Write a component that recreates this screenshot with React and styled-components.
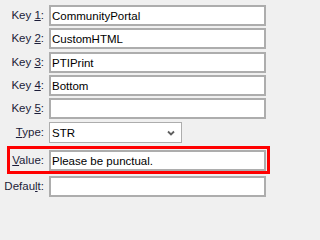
import React from "react";
import styled, { createGlobalStyle } from "styled-components";

const Global = createGlobalStyle`
  html, body { margin: 0; padding: 0; background: #f0f0f0; }
  body { font-family: "Liberation Sans", Arial, sans-serif; font-size: 11.5px; }
`;

const Form = styled.div`
  display: flex;
  flex-direction: column;
  padding-top: 5px;
  width: 271px;
  height: 202px;
  box-sizing: border-box;
`;

const Row = styled.div`
  display: grid;
  grid-template-columns: ${(p) => p.$labelW || 44}px 217px;
  column-gap: 5px;
  align-items: center;
  margin-top: ${(p) => p.$mt || 0}px;
`;

const Highlight = styled.div`
  margin-top: ${(p) => p.$mt || 0}px;
  margin-left: 7px;
  width: 263px;
  box-sizing: border-box;
  border: 3px solid #ff0000;
  padding: 1px 0 0 0;
`;

const Label = styled.label`
  text-align: right;
  color: #1c1c38;
  white-space: nowrap;
  font-size: 11.5px;
  line-height: 13px;
`;

const U = styled.span`
  text-decoration: underline;
  text-underline-offset: 1px;
`;

const Field = styled.div`
  box-sizing: border-box;
  height: 21px;
  width: ${(p) => p.$w || 217}px;
  background: #ffffff;
  border: 2px solid #adadad;
  padding: 0 0 0 1px;
  display: flex;
  align-items: center;
  color: #000;
  font-size: 11.5px;
  white-space: nowrap;
  overflow: hidden;
`;

const Select = styled.div`
  box-sizing: border-box;
  height: 21px;
  width: 133px;
  background: #ffffff;
  border: 1px solid #adadad;
  padding: 0 6px 0 2px;
  display: flex;
  align-items: center;
  justify-content: space-between;
  color: #000;
  font-size: 11.5px;
`;

const Chevron = () => (
  <svg width="8" height="6" viewBox="0 0 8 6">
    <polyline points="1,1.5 4,4.5 7,1.5" fill="none" stroke="#606060" strokeWidth="1.8" />
  </svg>
);

const keys = ["CommunityPortal", "CustomHTML", "PTIPrint", "Bottom", ""];
const gaps = [0, 2, 3, 2, 2];

export default function App() {
  return (
    <>
      <Global />
      <Form>
        {keys.map((k, i) => (
          <Row key={i} $mt={gaps[i]}>
            <Label>
              Key <U>{i + 1}</U>:
            </Label>
            <Field>{k}</Field>
          </Row>
        ))}
        <Row $mt={3}>
          <Label>
            <U>T</U>ype:
          </Label>
          <Select>
            <span>STR</span>
            <Chevron />
          </Select>
        </Row>
        <Highlight $mt={3}>
          <Row $labelW={34}>
            <Label>
              <U>V</U>alue:
            </Label>
            <Field>Please be punctual.</Field>
          </Row>
        </Highlight>
        <Row $mt={2}>
          <Label>
            Defau<U>l</U>t:
          </Label>
          <Field />
        </Row>
      </Form>
    </>
  );
}
